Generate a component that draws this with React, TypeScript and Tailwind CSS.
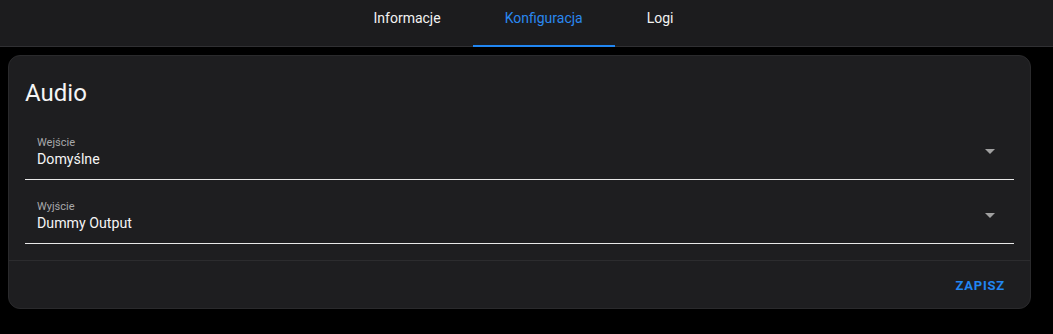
export default function App() {
  const tabs = ["Informacje", "Konfiguracja", "Logi"];
  const fields = [
    { label: "Wejście", value: "Domyślne" },
    { label: "Wyjście", value: "Dummy Output" },
  ];
  return (
    <div className="min-h-[334px] bg-black text-white font-['Roboto',sans-serif]">
      <div className="h-[47px] bg-[#1c1c1e] border-b border-[#303033] flex justify-center pr-[6px]">
        {tabs.map((t) => (
          <div
            key={t}
            className={`relative px-8 flex items-center text-[14px] ${
              t === "Konfiguracja" ? "text-[#2a88f0]" : "text-[#f2f2f2]"
            }`}
          >
            <span className="-mt-[10px]">{t}</span>
            {t === "Konfiguracja" && (
              <div className="absolute left-0 right-0 bottom-[-1px] h-[2px] bg-[#2186f2]" />
            )}
          </div>
        ))}
      </div>
      <div className="pl-2 pr-[22px] pt-2">
        <div className="bg-[#1e1e20] rounded-xl border border-[#2a2a2c]">
          <div className="px-4 pt-[22px] pb-4">
            <h2 className="text-[24px] leading-[30px] text-[#f5f5f5]">Audio</h2>
            <div className="mt-[28px] flex flex-col gap-[20px]">
              {fields.map((f) => (
                <div key={f.label} className="border-b border-[#e8e8e8] pl-3 pr-[19px] pb-[11px] flex items-center">
                  <div className="flex-1">
                    <div className="text-[11px] leading-[14px] text-[#a8a8aa]">{f.label}</div>
                    <div className="text-[14.2px] leading-[18px] text-[#f5f5f5]">{f.value}</div>
                  </div>
                  <div className="w-0 h-0 border-l-[5px] border-r-[5px] border-t-[5px] border-l-transparent border-r-transparent border-t-[#a0a0a0] mb-[2px]" />
                </div>
              ))}
            </div>
          </div>
          <div className="border-t border-[#2c2c2e] h-[48px] flex items-center justify-end pr-[25px]">
            <span className="text-[13px] font-bold tracking-[0.06em] text-[#2186f2] mt-[2px]">ZAPISZ</span>
          </div>
        </div>
      </div>
    </div>
  );
}
